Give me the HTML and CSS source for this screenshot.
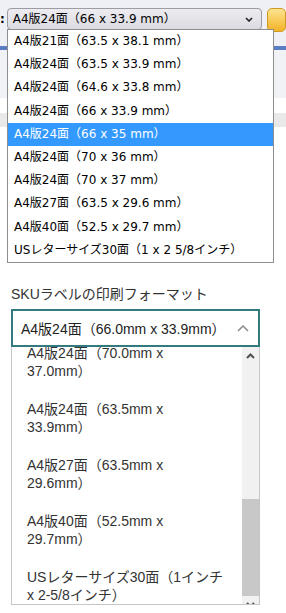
FILE: index.html
```html
<!DOCTYPE html>
<html lang="ja">
<head>
<meta charset="utf-8">
<title>SKU label format</title>
<link rel="stylesheet" href="styles.css">
</head>
<body>
<div class="legacy">
  <div class="toolbar">
    <span class="colon">:</span>
    <div class="old-select">
      <span class="old-value">A4版24面（66 x 33.9 mm）</span>
      <svg class="old-chev" width="8" height="5" viewBox="0 0 8 5"><path d="M1 1 L4 4 L7 1" fill="none" stroke="#222" stroke-width="1.6"/></svg>
    </div>
    <div class="old-btn"></div>
  </div>
  <div class="bar-blue"></div>
  <div class="bar-sub"></div>
  <div class="bar-white"></div>
  <div class="bar-grey"></div>
  <ul class="old-list">
    <li>A4版21面（63.5 x 38.1 mm）</li>
    <li>A4版24面（63.5 x 33.9 mm）</li>
    <li>A4版24面（64.6 x 33.8 mm）</li>
    <li>A4版24面（66 x 33.9 mm）</li>
    <li class="active">A4版24面（66 x 35 mm）</li>
    <li>A4版24面（70 x 36 mm）</li>
    <li>A4版24面（70 x 37 mm）</li>
    <li>A4版27面（63.5 x 29.6 mm）</li>
    <li>A4版40面（52.5 x 29.7 mm）</li>
    <li>USレターサイズ30面（1 x 2 5/8インチ）</li>
  </ul>
</div>
<section class="sku">
  <div class="sku-label">SKUラベルの印刷フォーマット</div>
  <div class="sku-select">
    <span class="sku-value">A4版24面（66.0mm x 33.9mm）</span>
    <svg class="sku-chev" width="12" height="7" viewBox="0 0 12 7"><path d="M1 6 L6 1 L11 6" fill="none" stroke="#8a8a8a" stroke-width="1.5"/></svg>
  </div>
  <div class="sku-list">
    <div class="sku-scroll">
      <div class="sku-items">
        <div class="sku-item">A4版24面（70.0mm x 37.0mm）</div>
        <div class="sku-item">A4版24面（63.5mm x 33.9mm）</div>
        <div class="sku-item">A4版27面（63.5mm x 29.6mm）</div>
        <div class="sku-item">A4版40面（52.5mm x 29.7mm）</div>
        <div class="sku-item">USレターサイズ30面（1インチ x 2-5/8インチ）</div>
      </div>
    </div>
    <div class="scrollbar">
      <div class="sb-btn"><svg width="9" height="6" viewBox="0 0 9 6"><path d="M1 5 L4.5 1.5 L8 5" fill="none" stroke="#505050" stroke-width="2"/></svg></div>
      <div class="sb-track"><div class="sb-thumb"></div></div>
      <div class="sb-btn"><svg width="9" height="6" viewBox="0 0 9 6"><path d="M1 1 L4.5 4.5 L8 1" fill="none" stroke="#505050" stroke-width="2"/></svg></div>
    </div>
  </div>
</section>
</body>
</html>
```

FILE: styles.css
```css
html, body {
  margin: 0;
  padding: 0;
  background: #ffffff;
}

body {
  width: 286px;
  height: 613px;
  overflow: hidden;
}

.legacy {
  position: relative;
  height: 262px;
  background: #ffffff;
  font-family: "DejaVu Sans", "Noto Sans CJK JP", sans-serif;
  font-size: 12px;
  color: #000;
}

.toolbar {
  height: 46px;
  box-sizing: border-box;
  padding-top: 8px;
  display: flex;
  align-items: flex-start;
  background: #eff0f5;
}

.colon {
  width: 7px;
  font-weight: bold;
  line-height: 22px;
}

.old-select {
  width: 265px;
  height: 22px;
  box-sizing: border-box;
  border: 1px solid #9c9ca4;
  border-radius: 4px;
  background: linear-gradient(#ececf1, #dadae0);
  display: flex;
  align-items: center;
  justify-content: space-between;
  padding: 0 8px 0 5px;
}

.old-value {
  line-height: 20px;
  white-space: nowrap;
}

.old-chev {
  display: block;
}

.old-btn {
  margin-left: 5px;
  width: 20px;
  height: 24px;
  box-sizing: border-box;
  border: 1px solid #cf9a1f;
  border-radius: 5px;
  background: linear-gradient(#fde48f, #f2b326);
}

.bar-blue {
  height: 4px;
  background: #5a7cc2;
}

.bar-sub {
  height: 48px;
  background: #f1f2f6;
}

.bar-white {
  height: 15px;
  background: #ffffff;
}

.bar-grey {
  height: 14px;
  background: #e9e9e9;
}

.old-list {
  position: absolute;
  top: 29px;
  left: 7px;
  width: 267px;
  box-sizing: border-box;
  margin: 0;
  padding: 0;
  list-style: none;
  border: 1px solid #8e8e8e;
  background: #ffffff;
}

.old-list li {
  height: 23.2px;
  line-height: 23.2px;
  padding-left: 6px;
  white-space: nowrap;
}

.old-list li.active {
  background: #3399ff;
  color: #ffffff;
}

.sku {
  padding-left: 11px;
  font-family: "Liberation Sans", "Noto Sans CJK JP", sans-serif;
  font-size: 14px;
}

.sku-label {
  margin-top: 22px;
  line-height: 20px;
  color: #333;
}

.sku-select {
  margin-top: 5px;
  width: 249px;
  height: 38px;
  box-sizing: border-box;
  border: 2px solid #327a80;
  display: flex;
  align-items: center;
  justify-content: space-between;
  padding: 0 9px 0 8px;
  color: #222;
}

.sku-value {
  white-space: nowrap;
}

.sku-chev {
  display: block;
}

.sku-list {
  width: 249px;
  height: 258px;
  box-sizing: border-box;
  border: 1px solid #c6c6c6;
  border-top: none;
  display: flex;
  overflow: hidden;
}

.sku-scroll {
  flex: 1;
  min-width: 0;
  overflow: hidden;
}

.sku-items {
  margin-top: -13px;
}

.sku-item {
  padding: 10px 16px 10px 15px;
  line-height: 18px;
  color: #333;
  text-spacing-trim: space-all;
}

.scrollbar {
  width: 17px;
  height: 266px;
  flex: none;
  display: flex;
  flex-direction: column;
  background: #f1f1f1;
}

.sb-btn {
  height: 17px;
  display: flex;
  align-items: center;
  justify-content: center;
}

.sb-track {
  height: 232px;
}

.sb-thumb {
  margin-top: 135px;
  height: 97px;
  background: #c8c8c8;
}
```
